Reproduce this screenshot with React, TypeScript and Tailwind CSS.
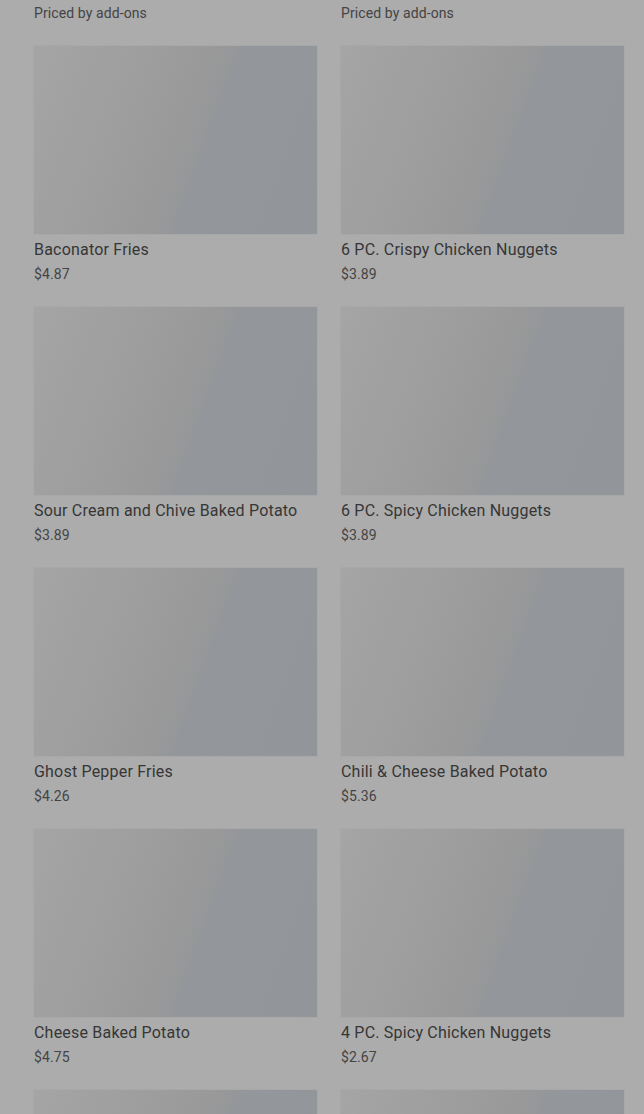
import React from 'react';

interface MenuItem {
  name: string;
  price: string;
}

const ITEMS: MenuItem[] = [
  { name: 'Baconator Fries', price: '$4.87' },
  { name: '6 PC. Crispy Chicken Nuggets', price: '$3.89' },
  { name: 'Sour Cream and Chive Baked Potato', price: '$3.89' },
  { name: '6 PC. Spicy Chicken Nuggets', price: '$3.89' },
  { name: 'Ghost Pepper Fries', price: '$4.26' },
  { name: 'Chili & Cheese Baked Potato', price: '$5.36' },
  { name: 'Cheese Baked Potato', price: '$4.75' },
  { name: '4 PC. Spicy Chicken Nuggets', price: '$2.67' },
  { name: '', price: '' },
  { name: '', price: '' },
];

const Placeholder: React.FC = () => (
  <div className="h-[188px] w-full bg-[linear-gradient(110deg,#a5a5a5_0%,#9c9c9c_40%,#999999_52%,#93969a_60%,#92959a_100%)] shadow-[0_0_0_1px_#a8a8a8]" />
);

const ItemCard: React.FC<{ item: MenuItem }> = ({ item }) => (
  <div className="flex flex-col">
    <Placeholder />
    <h3 className="mt-[4px] text-[16px] leading-6 font-normal tracking-[0.2px] text-[#363636] truncate">{item.name}</h3>
    <p className="mt-[2px] text-[14px] leading-5 tracking-[0.1px] text-[#444444]">{item.price}</p>
  </div>
);

const App: React.FC = () => {
  return (
    <div
      className="h-[1114px] overflow-hidden bg-[#acacac] pl-[34px] pr-[20px] pt-[3px]"
      style={{ fontFamily: 'Roboto, "Noto Sans", sans-serif' }}
    >
      <div className="grid grid-cols-2 gap-x-6">
        <p className="text-[14px] leading-5 tracking-[0.1px] text-[#444444]">Priced by add-ons</p>
        <p className="text-[14px] leading-5 tracking-[0.1px] text-[#444444]">Priced by add-ons</p>
      </div>
      <div className="mt-[23px] grid grid-cols-2 gap-x-6 gap-y-[23px]">
        {ITEMS.map((item, i) => (
          <ItemCard key={i} item={item} />
        ))}
      </div>
    </div>
  );
};

export default App;
